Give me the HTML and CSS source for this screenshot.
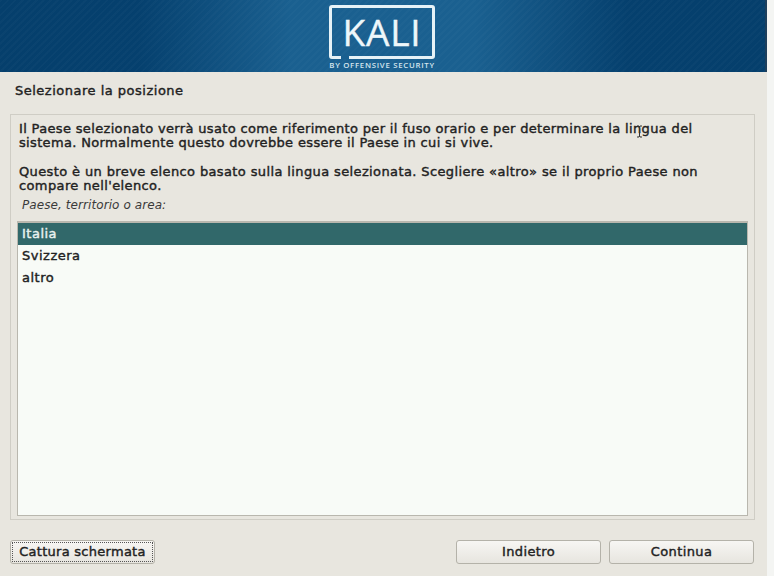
FILE: index.html
```html
<!DOCTYPE html>
<html lang="it">
<head>
<meta charset="utf-8">
<title>Selezionare la posizione</title>
<link rel="stylesheet" href="styles.css">
</head>
<body>
<div class="window">
  <header class="banner">
    <div class="logo">
      <div class="logo-box"><span class="logo-word">KALI</span><span class="logo-gap"></span></div>
      <div class="logo-sub">BY OFFENSIVE SECURITY</div>
    </div>
  </header>
  <main class="content">
    <h1 class="title">Selezionare la posizione</h1>
    <section class="panel">
      <p class="para">Il Paese selezionato verrà usato come riferimento per il fuso orario e per determinare la lingua del<br>sistema. Normalmente questo dovrebbe essere il Paese in cui si vive.</p>
      <p class="para para-second">Questo è un breve elenco basato sulla lingua selezionata. Scegliere «altro» se il proprio Paese non<br>compare nell'elenco.</p>
      <div class="label">Paese, territorio o area:</div>
      <ul class="list">
        <li class="item item-selected">Italia</li>
        <li class="item">Svizzera</li>
        <li class="item">altro</li>
      </ul>
    </section>
    <footer class="actions">
      <button class="btn btn-focus"><span class="btn-focus-inner">Cattura schermata</span></button>
      <div class="actions-right">
        <button class="btn btn-nav">Indietro</button>
        <button class="btn btn-nav">Continua</button>
      </div>
    </footer>
  </main>
  <svg class="cursor" width="7" height="13" viewBox="0 0 7 13"><path d="M1 1h2l.5 1 .5-1h2M3.5 2v9M1 12h2l.5-1 .5 1h2" fill="none" stroke="#333" stroke-width="1"/></svg>
</div>
</body>
</html>
```
FILE: styles.css
```css
* { box-sizing: border-box; }
html, body { margin: 0; padding: 0; background: #f4f5f3; }
body { width: 774px; height: 576px; overflow: hidden; font-family: "DejaVu Sans", sans-serif; color: #1c1c1c; }
.window { position: relative; width: 767px; height: 576px; background: #e8e6df; display: flex; flex-direction: column; }
.banner { height: 72px; flex: none; display: flex; justify-content: center; border-right: 2px solid #1d3f5c; background: repeating-linear-gradient(135deg, rgba(255,255,255,0.018) 0 2px, rgba(255,255,255,0) 2px 5px), linear-gradient(90deg, #053f6c, #05406e 18%, #1a6090 38%, #1a6090 62%, #05406e 82%, #053f6c); }
.logo { margin-top: 5px; margin-right: 1px; width: 106px; display: flex; flex-direction: column; align-items: center; }
.logo-box { position: relative; width: 106px; height: 54px; border: 3px solid #e6f2f7; border-radius: 3px; display: flex; align-items: center; justify-content: center; }
.logo-gap { position: absolute; left: 9px; bottom: -3px; width: 8px; height: 3px; background: #1a6090; }
.logo-word { font-family: "Open Sans", sans-serif; font-size: 37px; line-height: 40px; color: #eef7fa; letter-spacing: 0.8px; -webkit-text-stroke: 0.4px #eef7fa; }
.logo-sub { font-family: "Open Sans", sans-serif; font-weight: 600; font-size: 7.8px; line-height: 9px; margin-top: 2px; color: #d5e6ee; letter-spacing: 0.72px; white-space: nowrap; }
.content { flex: 1; padding: 0 13px 0 10px; display: flex; flex-direction: column; }
.title { margin: 12px 0 0 5px; font-size: 13px; line-height: 14px; font-weight: 400; letter-spacing: 0.5px; -webkit-text-stroke: 0.4px #222; height: 16px; color: #222; }
.panel { margin-top: 14px; height: 406px; width: 745px; border: 1px solid #cfcdc5; padding: 7px 6px 3px 8px; display: flex; flex-direction: column; }
.para { margin: 0; font-size: 13px; line-height: 14px; letter-spacing: 0.34px; -webkit-text-stroke: 0.4px #222; color: #222; white-space: nowrap; }
.para-second { margin-top: 15px; letter-spacing: 0.38px; }
.label { margin: 6px 0 0 3px; font-size: 12px; line-height: 13px; font-style: italic; color: #3a3a3a; letter-spacing: 0.08px; }
.list { list-style: none; margin: 9px 0 0 -2px; padding: 0; flex: 1; border: 1px solid #b9b7ae; border-top-width: 2px; background: #f8fbf7; }
.item { height: 22px; line-height: 22px; padding-left: 4px; font-size: 13px; letter-spacing: 0.5px; -webkit-text-stroke: 0.4px #222; color: #222; }
.item-selected { background: #31686a; color: #e9f2f0; -webkit-text-stroke: 0.4px #e9f2f0; }
.actions { display: flex; justify-content: space-between; margin-top: 20px; }
.btn { height: 24px; font-family: inherit; font-size: 13px; letter-spacing: 0.38px; -webkit-text-stroke: 0.4px #222; color: #222; border: 1px solid #b4b2a9; border-radius: 3px; background: linear-gradient(#f7f6f3, #e7e5df); padding: 0; }
.btn-focus { width: 145px; padding: 1px; letter-spacing: 0.27px; }
.btn-focus-inner { display: block; height: 20px; line-height: 18px; border: 1px dotted #555; }
.actions-right { display: flex; gap: 8px; }
.btn-nav { width: 145px; padding-bottom: 2px; }
.cursor { position: absolute; left: 636px; top: 125px; }
```
